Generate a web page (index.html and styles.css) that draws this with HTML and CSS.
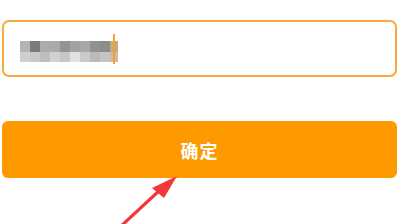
FILE: index.html
```html
<!DOCTYPE html>
<html lang="zh-CN">
<head>
    <meta charset="UTF-8">
    <meta name="viewport" content="width=device-width, initial-scale=1.0">
    <title>确定</title>
    <link rel="stylesheet" href="styles.css">
</head>
<body>
    <div class="page">
        <div class="field">
            <svg class="mosaic" width="98" height="21" viewBox="0 0 98 21">
                <rect x="0" y="0" width="10" height="11" fill="#b4b4b4"/>
                <rect x="10" y="0" width="10" height="11" fill="#7a7a7a"/>
                <rect x="20" y="0" width="10" height="11" fill="#acacac"/>
                <rect x="30" y="0" width="10" height="11" fill="#aaaaaa"/>
                <rect x="40" y="0" width="10" height="11" fill="#939393"/>
                <rect x="50" y="0" width="10" height="11" fill="#a2a2a2"/>
                <rect x="60" y="0" width="10" height="11" fill="#a8a8a8"/>
                <rect x="70" y="0" width="10" height="11" fill="#929292"/>
                <rect x="80" y="0" width="10" height="11" fill="#8c8c8c"/>
                <rect x="90" y="0" width="8" height="11" fill="#c2a98a"/>
                <rect x="0" y="11" width="10" height="10" fill="#cfcfcf"/>
                <rect x="10" y="11" width="10" height="10" fill="#c9c9c9"/>
                <rect x="20" y="11" width="10" height="10" fill="#bebebe"/>
                <rect x="30" y="11" width="10" height="10" fill="#d2d2d2"/>
                <rect x="40" y="11" width="10" height="10" fill="#c6c6c6"/>
                <rect x="50" y="11" width="10" height="10" fill="#e2e2e2"/>
                <rect x="60" y="11" width="10" height="10" fill="#cacaca"/>
                <rect x="70" y="11" width="10" height="10" fill="#bababa"/>
                <rect x="80" y="11" width="10" height="10" fill="#c4c4c4"/>
                <rect x="90" y="11" width="8" height="10" fill="#cdbba6"/>
            </svg>
            <span class="caret"></span>
        </div>
        <button class="confirm">确定</button>
    </div>

    <svg class="pointer" width="80" height="60" viewBox="0 0 80 60">
        <line x1="10" y1="62" x2="50" y2="25" stroke="#f2383a" stroke-width="3.2"/>
        <polygon points="67,11 42,23 54,33" fill="#f2383a"/>
    </svg>
</body>
</html>
```

FILE: styles.css
```css
body {
    margin: 0;
    background: #fff;
    font-family: "Noto Sans CJK SC", "Noto Sans", sans-serif;
    overflow: hidden;
}

.page {
    display: flex;
    flex-direction: column;
    gap: 44px;
    padding: 20px 14px 0 2px;
}

.field {
    height: 57px;
    box-sizing: border-box;
    border: 2px solid #f7a93a;
    border-radius: 7px;
    display: flex;
    align-items: center;
    padding-left: 16px;
    position: relative;
}

.mosaic {
    display: block;
    margin-top: 6px;
    filter: blur(0.6px);
}

.caret {
    position: absolute;
    left: 109px;
    top: 12px;
    width: 2px;
    height: 30px;
    background: #f6a12a;
}

.confirm {
    height: 57px;
    border: none;
    border-radius: 6px;
    background: #ff9900;
    color: #fff;
    font-family: inherit;
    font-size: 18px;
    font-weight: bold;
    letter-spacing: 1px;
    padding: 0;
}

.pointer {
    position: absolute;
    left: 110px;
    top: 165px;
}
```
